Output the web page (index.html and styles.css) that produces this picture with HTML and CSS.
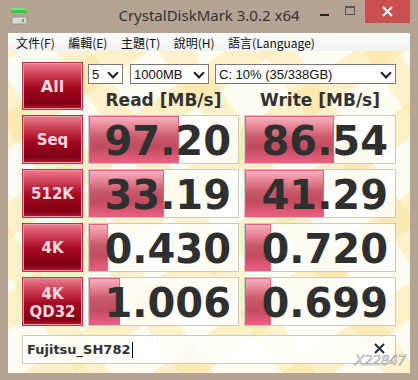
FILE: index.html
```html
<!DOCTYPE html>
<html>
<head>
    <meta charset="utf-8">
    <link rel="stylesheet" href="styles.css">
</head>
<body>
<div class="window">
    <div class="titlebar">
        <svg class="appicon" width="17" height="17" viewBox="0 0 17 17">
            <rect x="0" y="0" width="16" height="5" rx="1" fill="#3fc43f"/>
            <rect x="0" y="0" width="16" height="2" rx="1" fill="#7ee07e"/>
            <rect x="1" y="9" width="15" height="7" rx="1.5" fill="#d8d8d8" stroke="#8a8a8a" stroke-width="0.8"/>
            <rect x="11" y="11" width="2" height="3" fill="#3fc43f"/>
        </svg>
        <div class="title">CrystalDiskMark 3.0.2 x64</div>
        <div class="controls">
            <div class="ctl"><span class="minline"></span></div>
            <div class="ctl"><span class="maxbox"></span></div>
            <div class="ctl close">
                <svg width="11" height="11" viewBox="0 0 11 11"><path d="M1 1 L10 10 M10 1 L1 10" stroke="#fff" stroke-width="2"/></svg>
            </div>
        </div>
    </div>
    <div class="menubar">
        <span class="mi">文件(F)</span>
        <span class="mi">編輯(E)</span>
        <span class="mi">主題(T)</span>
        <span class="mi">說明(H)</span>
        <span class="mi">語言(Language)</span>
    </div>
    <div class="client">
        <div class="grid">
            <div class="btn big">All</div>
            <div class="top">
                <div class="selects">
                    <div class="sel w1">5<i class="chev"></i></div>
                    <div class="sel w2">1000MB<i class="chev"></i></div>
                    <div class="sel w3">C: 10% (35/338GB)<i class="chev"></i></div>
                </div>
                <div class="heads">
                    <div class="head">Read [MB/s]</div>
                    <div class="head">Write [MB/s]</div>
                </div>
            </div>

            <div class="btn">Seq</div>
            <div class="cell"><div class="bar" style="width:90px"></div><span class="val">97.20</span></div>
            <div class="cell"><div class="bar" style="width:89px"></div><span class="val">86.54</span></div>

            <div class="btn">512K</div>
            <div class="cell"><div class="bar" style="width:75px"></div><span class="val">33.19</span></div>
            <div class="cell"><div class="bar" style="width:79px"></div><span class="val">41.29</span></div>

            <div class="btn">4K</div>
            <div class="cell"><div class="bar" style="width:19px"></div><span class="val">0.430</span></div>
            <div class="cell"><div class="bar" style="width:26px"></div><span class="val">0.720</span></div>

            <div class="btn two">4K<br>QD32</div>
            <div class="cell"><div class="bar" style="width:31px"></div><span class="val">1.006</span></div>
            <div class="cell"><div class="bar" style="width:26px"></div><span class="val">0.699</span></div>
        </div>
        <div class="comment">
            <span class="ctext">Fujitsu_SH782</span><span class="caret"></span>
            <svg class="clear" width="11" height="11" viewBox="0 0 11 11"><path d="M1 1 L10 10 M10 1 L1 10" stroke="#1c2f44" stroke-width="2"/></svg>
        </div>
        <div class="mark">X22847</div>
    </div>
</div>
</body>
</html>
```
FILE: styles.css
```css
body {
    margin: 0;
    background: #b5a493;
}
.window {
    width: 418px;
    height: 380px;
    background: #b5a493;
    box-sizing: border-box;
    padding: 0 8px 7px 8px;
    display: flex;
    flex-direction: column;
}
.titlebar {
    height: 33px;
    display: flex;
    align-items: flex-start;
    position: relative;
}
.appicon {
    margin: 8px 0 0 3px;
}
.title {
    position: absolute;
    left: -8px;
    right: -8px;
    top: 5px;
    text-align: center;
    font-family: "Noto Sans", "Open Sans", sans-serif;
    font-size: 15px;
    color: #333;
}
.controls {
    margin-left: auto;
    display: flex;
    position: relative;
}
.ctl {
    width: 26px;
    height: 23px;
    display: flex;
    align-items: center;
    justify-content: center;
}
.minline {
    width: 9px;
    height: 2px;
    background: #222;
    margin-top: 7px;
}
.maxbox {
    width: 8px;
    height: 6px;
    border: 1px solid #555;
    border-top-width: 2px;
    margin-top: -2px;
}
.close {
    width: 45px;
    margin-left: 2px;
    background: #c9504f;
}
.menubar {
    height: 18px;
    background: linear-gradient(#fbfbfc, #f1f2f4);
    display: flex;
    align-items: center;
    padding-left: 8px;
    font-family: "Noto Sans CJK TC", "Noto Sans", sans-serif;
    font-size: 12px;
    color: #111;
}
.mi {
    margin-right: 13.5px;
}
.client {
    flex: 1;
    position: relative;
    padding: 11px 14px 0 14px;
    background-color: #fffdf2;
    background-image:
        repeating-linear-gradient(-35deg, transparent 0 44px, rgba(252, 222, 140, 0.42) 44px 74px),
        repeating-linear-gradient(55deg, transparent 0 56px, rgba(252, 222, 140, 0.36) 56px 84px);
}
.grid {
    display: grid;
    grid-template-columns: 61px 151px 152px;
    grid-template-rows: 48px 49px 49px 49px 49px;
    gap: 5px;
}
.btn {
    box-sizing: border-box;
    border: 1px solid #c42c48;
    box-shadow: inset 0 0 0 1px #ef9aaa;
    background: linear-gradient(#ea7d90 0%, #c93a4f 28%, #a3071f 55%, #7f0012 88%, #b21c34 100%);
    color: #fdd8e0;
    font-family: "DejaVu Sans", sans-serif;
    font-weight: bold;
    font-size: 15px;
    display: flex;
    align-items: center;
    justify-content: center;
    text-align: center;
}
.btn.big {
    font-size: 16px;
    padding-top: 1px;
}
.btn.two {
    line-height: 18px;
    padding-top: 2px;
}
.top {
    grid-column: 2 / 4;
    display: flex;
    flex-direction: column;
}
.selects {
    display: flex;
    margin-top: 2px;
    height: 20px;
}
.sel {
    box-sizing: border-box;
    height: 20px;
    border: 1px solid #7a7a7a;
    background: #fff;
    font-family: "Liberation Sans", sans-serif;
    font-size: 13px;
    color: #111;
    padding-left: 3px;
    display: flex;
    align-items: center;
    position: relative;
}
.w1 { width: 35px; }
.w2 { width: 79px; margin-left: 7px; }
.w3 { width: 181px; margin-left: 6px; }
.chev {
    position: absolute;
    right: 5px;
    top: 4px;
    width: 6px;
    height: 6px;
    border-right: 2px solid #222;
    border-bottom: 2px solid #222;
    transform: rotate(45deg);
}
.heads {
    display: flex;
    gap: 5px;
    margin-top: 6px;
}
.head {
    flex: 1;
    text-align: center;
    font-family: "DejaVu Sans", sans-serif;
    font-weight: bold;
    font-size: 17px;
    color: #323232;
}
.head:first-child {
    flex: 0 0 151px;
}
.cell {
    position: relative;
    box-sizing: border-box;
    border: 1px solid #c9c9c9;
    background: rgba(255, 255, 255, 0.78);
    display: flex;
    align-items: center;
    justify-content: flex-end;
    padding-right: 7px;
    overflow: hidden;
}
.bar {
    position: absolute;
    left: 0;
    top: 0;
    bottom: 0;
    box-sizing: border-box;
    border: 1px solid #e4607e;
    background: linear-gradient(#f6b2c0 0%, #e88898 20%, #c8586a 45%, #c04c5e 70%, #dc5874 88%, #e8607e 100%);
}
.val {
    position: relative;
    font-family: "DejaVu Sans", sans-serif;
    font-weight: bold;
    font-size: 40px;
    line-height: 40px;
    color: #2f2f2f;
    margin-top: 3px;
}
.comment {
    margin-top: 9px;
    height: 29px;
    box-sizing: border-box;
    border: 1px solid #c9c9c9;
    background: rgba(255, 255, 255, 0.82);
    display: flex;
    align-items: center;
    padding-left: 4px;
    font-family: "DejaVu Sans", sans-serif;
    font-weight: bold;
    font-size: 13px;
    color: #333;
}
.caret {
    width: 1px;
    height: 16px;
    background: #000;
    margin-left: 1px;
}
.clear {
    margin-left: auto;
    margin-right: 10px;
    margin-top: -3px;
}
.mark {
    position: absolute;
    right: 4px;
    bottom: 5px;
    font-family: "DejaVu Sans", sans-serif;
    font-style: italic;
    font-size: 14px;
    color: #fff;
    -webkit-text-stroke: 0.5px #8a8a8a;
    letter-spacing: -0.5px;
}
```
